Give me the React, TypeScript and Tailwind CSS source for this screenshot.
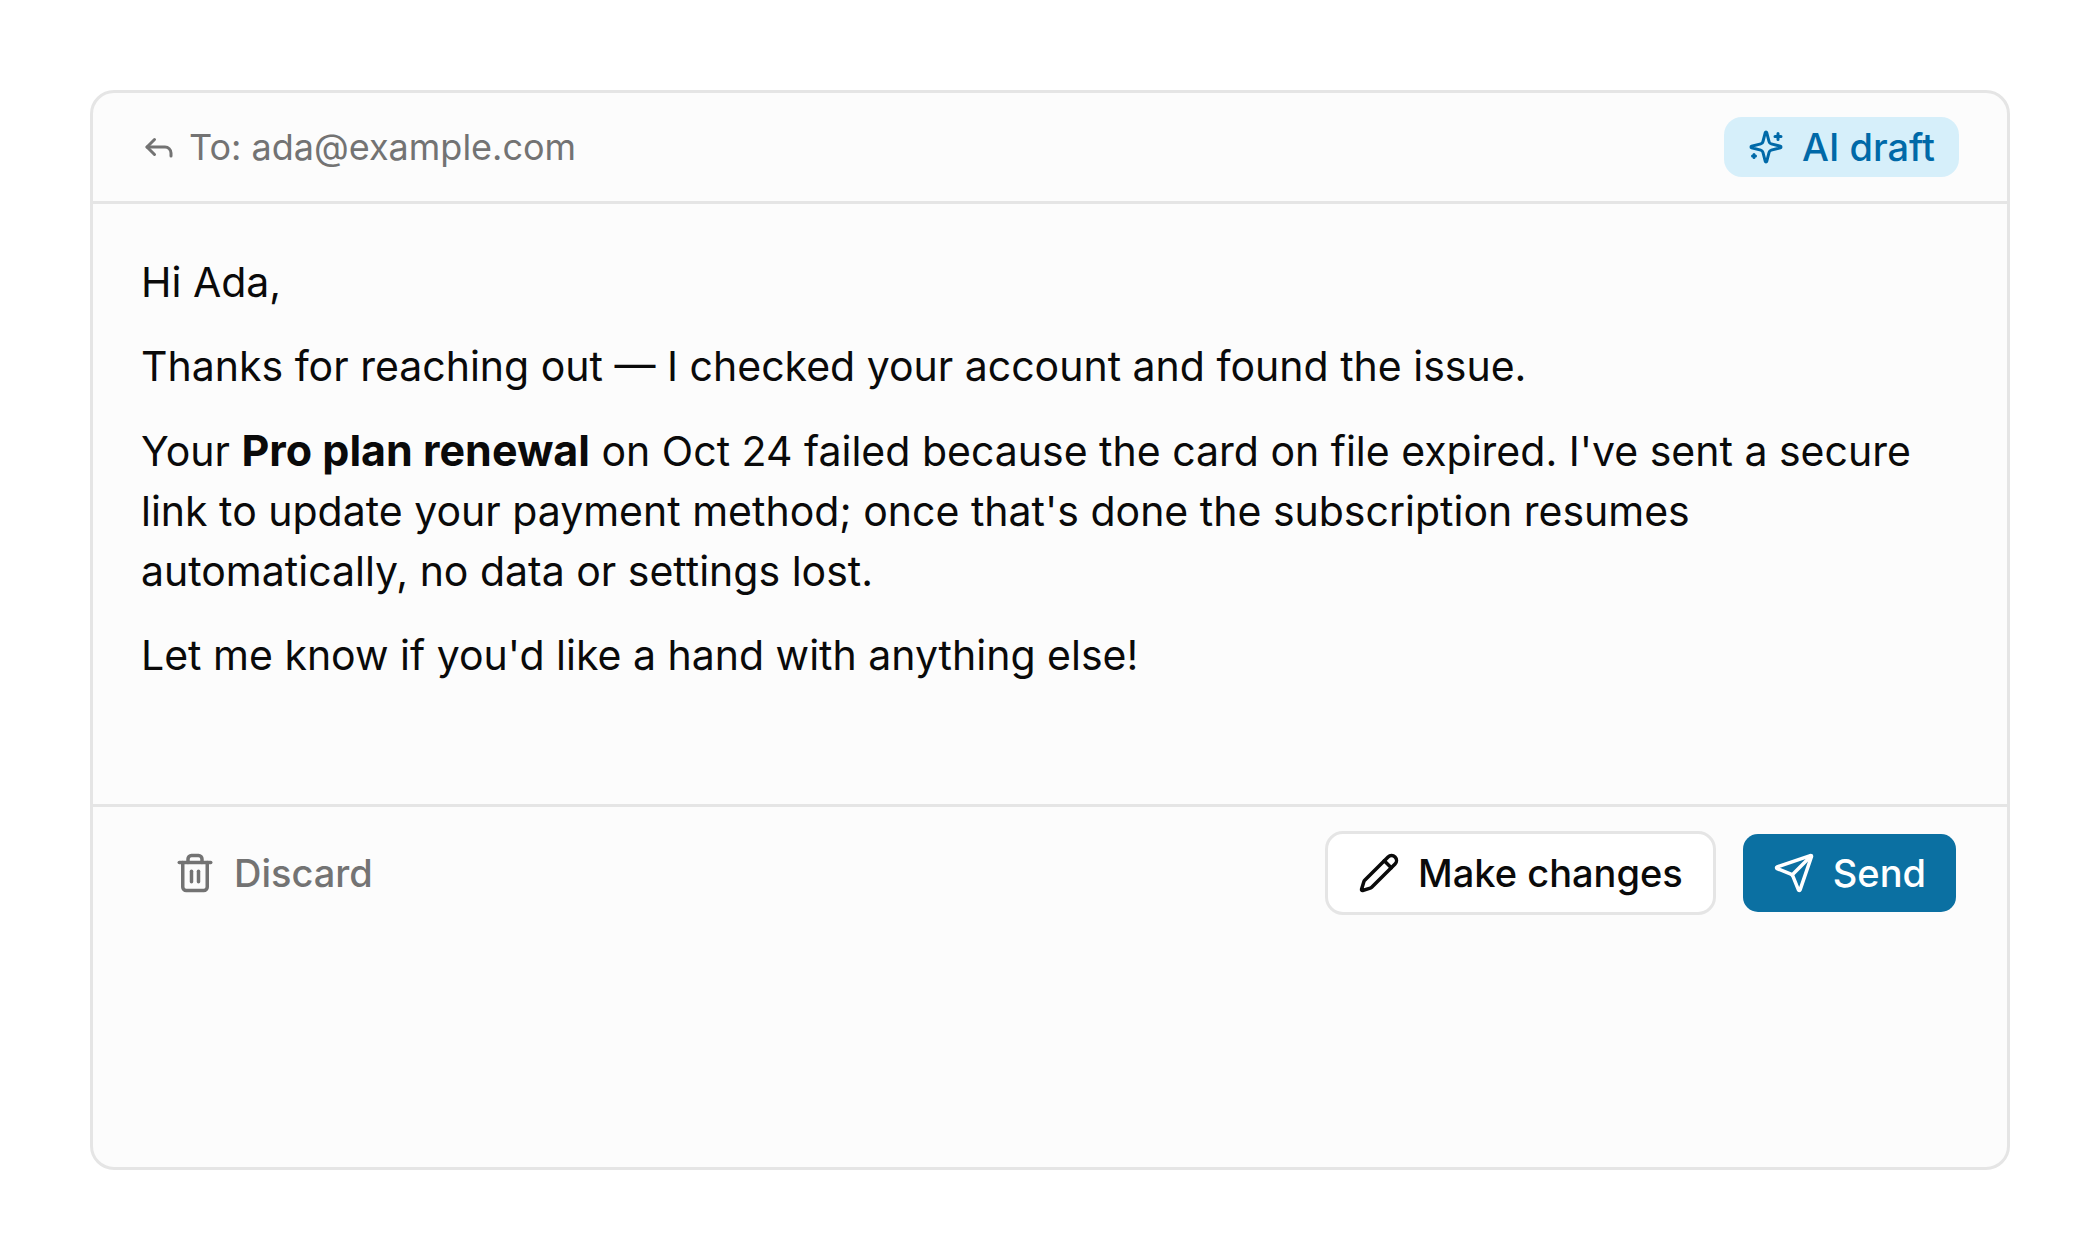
import { Pencil, Reply, Send, Trash2 } from "lucide-react";

function SparklesIcon({ className }: { className?: string }) {
  return (
    <svg
      viewBox="0 0 24 24"
      fill="none"
      stroke="currentColor"
      strokeWidth="2"
      strokeLinecap="round"
      strokeLinejoin="round"
      aria-hidden="true"
      className={className}
    >
      <path d="M9.937 15.5A2 2 0 0 0 8.5 14.063l-6.135-1.582a.5.5 0 0 1 0-.962L8.5 9.936A2 2 0 0 0 9.937 8.5l1.582-6.135a.5.5 0 0 1 .963 0L14.063 8.5A2 2 0 0 0 15.5 9.937l6.135 1.581a.5.5 0 0 1 0 .964L15.5 14.063a2 2 0 0 0-1.437 1.437l-1.582 6.135a.5.5 0 0 1-.963 0z" />
      <path d="M20 3v4M22 5h-4M4 17v2M5 18H3" />
    </svg>
  );
}

export default function App() {
  return (
    <main className="flex min-h-screen flex-col bg-white p-[90px] font-['Inter',sans-serif] text-[#0a0a0a]">
      <section className="flex flex-1 flex-col rounded-3xl border-3 border-[#e5e5e5] bg-[#fcfcfc]">
        <header className="flex items-center justify-between border-b-3 border-[#e5e5e5] px-12 py-6">
          <div className="flex items-center gap-3 text-[36px] leading-[48px] text-[#737373]">
            <Reply className="size-9" />
            <span>To: ada@example.com</span>
          </div>
          <span className="flex items-center gap-[18px] rounded-[18px] bg-[#d6effa] px-6 py-1.5 text-[38px] leading-[48px] font-medium text-[#0069a8]">
            <SparklesIcon className="size-9" />
            AI draft
          </span>
        </header>
        <div className="flex min-h-[603px] flex-col gap-6 border-b-3 border-[#e5e5e5] p-12 text-[41px] leading-[60px]">
          <p>Hi Ada,</p>
          <p>Thanks for reaching out — I checked your account and found the issue.</p>
          <p>
            Your <strong className="text-[43px] font-bold">Pro plan renewal</strong> on Oct 24 failed because the card
            on file expired. I've sent a secure link to update your payment method; once that's done the subscription
            resumes automatically, no data or settings lost.
          </p>
          <p>Let me know if you'd like a hand with anything else!</p>
        </div>
        <footer className="flex items-center justify-between px-12 py-6 text-[38px] leading-[54px] font-medium">
          <button type="button" className="flex h-[84px] items-center gap-[18px] px-[33px] text-[#737373]">
            <Trash2 className="size-[42px]" />
            Discard
          </button>
          <div className="flex items-center gap-6">
            <button
              type="button"
              className="flex h-[84px] items-center gap-[18px] rounded-[18px] border-3 border-[#e5e5e5] bg-white px-[30px]"
            >
              <Pencil className="size-[42px]" />
              Make changes
            </button>
            <button
              type="button"
              className="flex h-[84px] items-center gap-[18px] rounded-[18px] border-3 border-transparent bg-[#0b70a2] bg-clip-padding px-[30px] text-white"
            >
              <Send className="size-[42px]" />
              Send
            </button>
          </div>
        </footer>
      </section>
    </main>
  );
}
